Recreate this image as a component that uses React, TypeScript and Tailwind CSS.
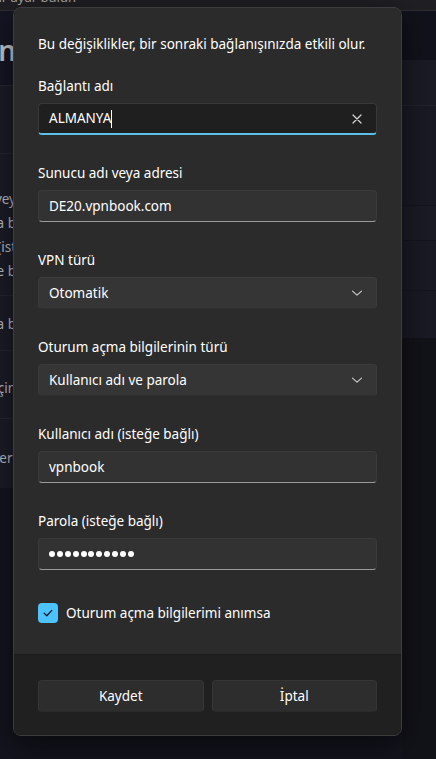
function Chevron() {
  return (
    <svg width="12" height="12" viewBox="0 0 12 12" fill="none" className="text-[#cfcfcf]">
      <path d="M1.5 4.2 6 8.2l4.5-4" stroke="currentColor" strokeWidth="1.1" strokeLinecap="round" strokeLinejoin="round" />
    </svg>
  );
}

function ClearIcon() {
  return (
    <svg width="10" height="10" viewBox="0 0 10 10" fill="none" className="text-[#d6d6d6]">
      <path d="M1 1l8 8M9 1 1 9" stroke="currentColor" strokeWidth="1.2" strokeLinecap="round" />
    </svg>
  );
}

function Field({ label, children, first }: { label: string; children: React.ReactNode; first?: boolean }) {
  return (
    <div className={first ? "mt-[22px]" : "mt-[28px]"}>
      <div className="text-[13.5px] leading-[20px] text-white">{label}</div>
      <div className="mt-[7px]">{children}</div>
    </div>
  );
}

function TextBox({ value }: { value: string }) {
  return (
    <div className="h-[32px] rounded-[4px] bg-[#323232] border border-[#3a3a3a] border-b-[#9a9a9a] flex items-center px-[10px] text-[13.5px] text-white">
      {value}
    </div>
  );
}

function Select({ value }: { value: string }) {
  return (
    <div className="h-[32px] rounded-[4px] bg-[#353535] border border-[#3b3b3b] border-b-[#2f2f2f] flex items-center justify-between pl-[10px] pr-[13px] text-[13.5px] text-white">
      <span>{value}</span>
      <Chevron />
    </div>
  );
}

function LeftRow({ h, text, border, pt }: { h: string; text?: string[]; border?: boolean; pt?: string }) {
  return (
    <div className={`${h} bg-[#1c1c28] ${border ? "border-t border-[#262633]" : ""} flex flex-col items-end overflow-hidden ${pt ?? ""}`}>
      {text?.map((t) => (
        <div key={t} className="whitespace-nowrap text-[13.5px] leading-[24px] text-[#bdbdc4] mr-[-3px]">
          {t}
        </div>
      ))}
    </div>
  );
}

export default function App() {
  return (
    <div className="relative w-[436px] h-[759px] overflow-hidden bg-[#13141d] font-['Segoe_UI','Noto_Sans',sans-serif]">
      {/* settings page behind the dialog */}
      <div className="h-[11px] bg-[#202024] border-b border-[#2e2e34] overflow-hidden">
        <div className="ml-[-10px] mt-[-10px] text-[13px] leading-[14px] text-[#a9a9ad]">Bir ayar bulun</div>
      </div>
      <div className="flex h-[748px]">
        <div className="w-[13px] flex flex-col">
          <div className="h-[74px] bg-[#161624] flex justify-end items-start pt-[22px] overflow-hidden">
            <div className="text-[28px] leading-[34px] font-semibold text-[#c9c9cc] whitespace-nowrap mr-[-3px]">Bağlantı ekleyin</div>
          </div>
          <LeftRow h="h-[68px]" border />
          <LeftRow h="h-[142px]" border pt="pt-[33px]" text={["Sunucu adı vey", "Oturum açma b", "Kullanıcı adı (ist", "Oturum açma ve b"]} />
          <LeftRow h="h-[55px]" border pt="pt-[16px]" text={["Kullanıcı adı ve parola b"]} />
          <LeftRow h="h-[68px]" border pt="pt-[25px]" text={["Proxy ayarları için"]} />
          <LeftRow h="h-[70px]" border pt="pt-[27px]" text={["Gelişmiş özellikleri"]} />
          <div className="flex-1 bg-[#13141e]" />
        </div>
        <div className="flex-1" />
        <div className="w-[34px] flex flex-col">
          <div className="h-[49px] bg-[#11121b]" />
          <div className="h-[45px] bg-[#1a1b25]" />
          <div className="h-[100px] bg-[#1a1a24] border-t border-[#23232e]" />
          <div className="h-[35px] bg-[#1b1b26] border-t border-[#15151e]" />
          <div className="h-[50px] bg-[#1a1a24] border-t border-[#15151e]" />
          <div className="h-[48px] bg-[#1a1a24] border-t border-[#15151e]" />
          <div className="flex-1 bg-[#121319]" />
        </div>
      </div>

      {/* dialog */}
      <div className="absolute left-[13px] top-[7px] w-[389px] h-[729px] rounded-[8px] border border-[#3d3d3d] overflow-hidden flex flex-col shadow-[0_8px_32px_rgba(0,0,0,0.55)]">
        <div className="flex-1 bg-[#2b2b2b] px-[24px] pt-[26px]">
          <p className="text-[13.5px] leading-[20px] text-white whitespace-nowrap">
            Bu değişiklikler, bir sonraki bağlanışınızda etkili olur.
          </p>

          <Field label="Bağlantı adı" first>
            <div className="h-[32px] rounded-[4px] bg-[#1f1f1f] border border-[#383838] border-b-2 border-b-[#5cbfe6] flex items-center pl-[10px] pr-[14px] text-[13.5px] text-white">
              <span>ALMANYA</span>
              <span className="w-px h-[18px] bg-white" />
              <span className="flex-1" />
              <ClearIcon />
            </div>
          </Field>

          <Field label="Sunucu adı veya adresi">
            <TextBox value="DE20.vpnbook.com" />
          </Field>

          <Field label="VPN türü">
            <Select value="Otomatik" />
          </Field>

          <Field label="Oturum açma bilgilerinin türü">
            <Select value="Kullanıcı adı ve parola" />
          </Field>

          <Field label="Kullanıcı adı (isteğe bağlı)">
            <TextBox value="vpnbook" />
          </Field>

          <Field label="Parola (isteğe bağlı)">
            <div className="h-[32px] rounded-[4px] bg-[#323232] border border-[#3a3a3a] border-b-[#9a9a9a] flex items-center gap-[1.9px] px-[10px]">
              {Array.from({ length: 11 }).map((_, i) => (
                <span key={i} className="w-[6px] h-[6px] rounded-full bg-white" />
              ))}
            </div>
          </Field>

          <div className="mt-[33px] flex items-center gap-[8px]">
            <div className="w-[20px] h-[20px] rounded-[4px] bg-[#4cc2ff] flex items-center justify-center">
              <svg width="12" height="12" viewBox="0 0 12 12" fill="none">
                <path d="M2.2 6.3 4.8 8.8 9.8 3.4" stroke="#0b1a22" strokeWidth="1.3" strokeLinecap="round" strokeLinejoin="round" />
              </svg>
            </div>
            <span className="text-[13.5px] leading-[20px] text-white">Oturum açma bilgilerimi anımsa</span>
          </div>
        </div>

        <div className="h-[81px] bg-[#202020] border-t border-[#1c1c1c] px-[24px] pt-[25px] grid grid-cols-2 gap-[8px] content-start">
          <button className="h-[32px] rounded-[4px] bg-[#2d2d2d] border border-[#353535] border-b-[#2a2a2a] text-[13.5px] text-white">
            Kaydet
          </button>
          <button className="h-[32px] rounded-[4px] bg-[#2d2d2d] border border-[#353535] border-b-[#2a2a2a] text-[13.5px] text-white">
            İptal
          </button>
        </div>
      </div>
    </div>
  );
}
